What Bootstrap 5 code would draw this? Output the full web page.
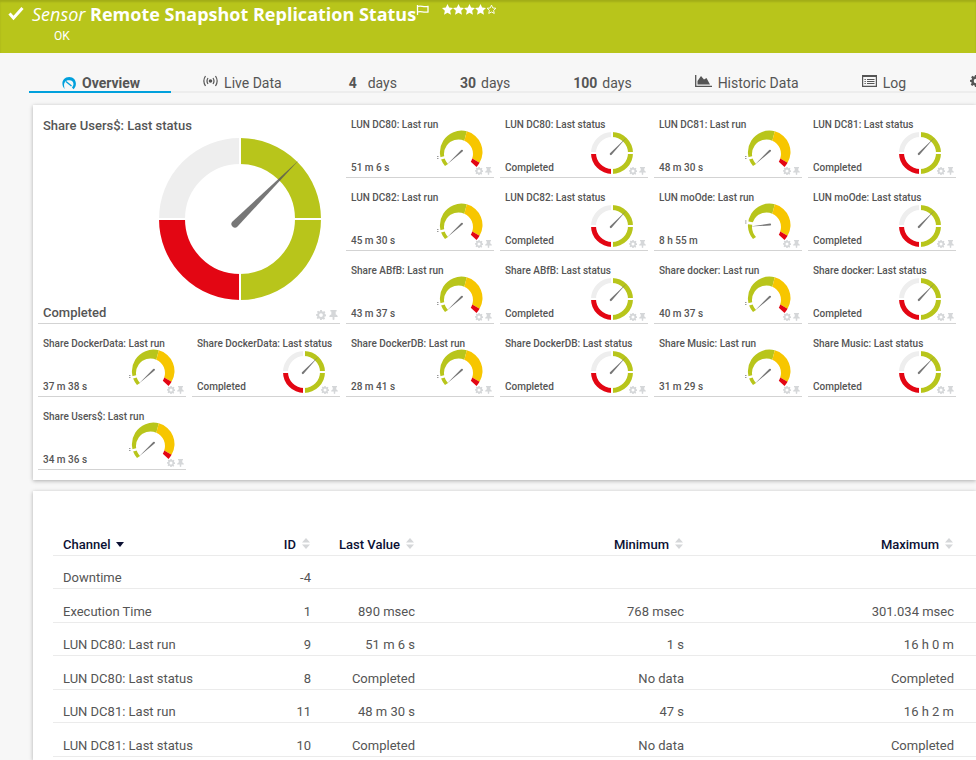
<!DOCTYPE html>
<html lang="en">
<head>
<meta charset="utf-8">
<meta name="viewport" content="width=device-width, initial-scale=1">
<title>Remote Snapshot Replication Status</title>
<link href="https://cdn.jsdelivr.net/npm/bootstrap@5.3.0/dist/css/bootstrap.min.css" rel="stylesheet">
<style>
  body { background: #f7f7f7; color: #555; font-family: Roboto, "Liberation Sans", sans-serif; font-size: 13px; line-height: 16px; overflow-x: hidden; }
  svg { display: block; flex: none; }
  .sensor-head { background: #b8c51b; color: #fff; min-height: 53px; padding: 2px 8px 8px; box-shadow: inset 0 2px 2px rgba(0,0,0,.12); }
  .sensor-head h1 { font-family: "Open Sans", "Noto Sans", sans-serif; font-size: 18px; line-height: 24px; }
  .sensor-state { font-size: 12px; line-height: 16px; padding: 2px 0 0 46px; }
  .head-btn { border: 0; background: none; padding: 3px 0 0; color: inherit; }
  .rating { padding: 2px 0 0 13px; }
  .tab-strip { margin-left: 29px; padding-top: 22px; box-shadow: inset 0 -2px #ededed; overflow: hidden; gap: 1px; }
  .tab-strip .nav-link { color: #555; font-size: 14px; line-height: 16px; padding: 0 31px; border-bottom: 2px solid transparent; display: flex; align-items: center; gap: 6px; white-space: nowrap; }
  .tab-strip .nav-link.active { color: #555; font-weight: 700; padding: 0 31px 0 33px; border-color: #00a0dc; }
  .tab-strip b { min-width: 14px; margin-right: -1px; }
  .tab-strip .nav-item { flex: none; }
  .panel { background: #fff; box-shadow: 0 1px 4px rgba(0,0,0,.3); margin-left: 33px; }
  .gauges { margin-top: 12px; padding: 6px 5px 10px; display: grid; grid-template-columns: repeat(auto-fill, 148px); grid-auto-rows: 67px; gap: 6px; }
  .tile { position: relative; border-bottom: 1px solid #d3d3d3; display: flex; flex-direction: column; }
  .tile h2 { font-size: 10px; line-height: 12px; font-weight: 500; margin: 0; padding: 8px 0 0 5px; white-space: nowrap; }
  .tile p { font-size: 10px; line-height: 12px; font-weight: 500; margin: 0; padding: 0 0 3px 5px; align-self: flex-end; }
  .tile .dial { margin: -1px 11px 0 auto; overflow: visible; }
  .tile .dial-ring { margin-right: 13px; }
  .tile-tools { position: absolute; right: 2px; bottom: 2px; display: flex; gap: 2px; }
  .tile-tools button { border: 0; background: none; padding: 0; color: #d5d7d9; }
  .tile-wide { grid-column: span 2; grid-row: span 3; }
  .tile-wide h2 { font-size: 13px; line-height: 15px; padding-top: 7px; }
  .tile-wide p { font-size: 13px; line-height: 14px; }
  .tile-wide .dial { margin: 5px 19px 0 auto; }
  .tile-wide .tile-tools { bottom: 3px; right: 2px; gap: 3px; }
  .channels { margin-top: 11px; padding: 42px 0 3px 20px; }
  .channels table { table-layout: fixed; font-size: 13px; line-height: 16px; margin: 0; color: #555; }
  .channels th, .channels td { padding: 0 10px 2px; height: 33px; vertical-align: bottom; text-align: right; border-bottom: 1px solid #ebebeb; color: #555; box-shadow: none; background: none; white-space: nowrap; }
  .channels tbody tr:nth-child(even) td { height: 34px; }
  .channels th { height: 22px; }
  .channels th:first-child, .channels td:first-child { text-align: left; }
  .channels th:last-child, .channels td:last-child { padding-right: 22px; }
  .sorter { border: 0; background: none; padding: 0; font-weight: 500; color: #0b1033; display: inline-flex; align-items: center; gap: 6px; }
  .sorter svg { color: #d5d7d9; margin: 0 1px 3px 0; }
  .sorter .sorted { color: #0b1033; margin-bottom: 0; }
  .c-name { width: 185px; } .c-id { width: 83px; } .c-last { width: 104px; } .c-min { width: 269px; }
</style>
</head>
<body class="d-flex flex-column min-vh-100">

<svg width="0" height="0" class="position-absolute" aria-hidden="true">
  <symbol id="gear" viewBox="0 0 16 16"><path fill="currentColor" fill-rule="evenodd" d="M6.600 0h2.800l.4 2.100 1.500.6L13.100 1.500l1.900 1.900-1.200 1.800.6 1.500 1.600.3v2.800l-2.100.4-.6 1.500 1.200 1.800-1.900 1.900-1.800-1.200-1.500.6L9.400 16H6.600l-.4-2.100-1.500-.6-1.800 1.200L1 12.600l1.200-1.800-.6-1.500L0 9V6.600l2.100-.4.6-1.500L1.500 2.900 3.400 1l1.800 1.200 1.100-.4zM8 5a3 3 0 1 0 0 6a3 3 0 0 0 0-6z"/></symbol>
  <symbol id="pin" viewBox="0 0 14 16"><path fill="currentColor" d="M2 0h10v2.500h-1.500V7c2 .5 3 1.600 3.300 4H8.500v4l-1.500 1l-1.500-1v-4H.2C.5 8.600 1.500 7.500 3.500 7V2.500H2z"/></symbol>
  <symbol id="star" viewBox="0 0 12 12"><path fill="currentColor" d="M6 0l1.800 3.900 4.200.5-3.100 2.900.9 4.300L6 9.500l-3.800 2.100.9-4.300L0 4.400l4.200-.5z"/></symbol>
  <symbol id="updown" viewBox="0 0 8 11"><path fill="currentColor" d="M4 0l4 4.500H0zM4 11L0 6.500h8z"/></symbol>
  <symbol id="ring" viewBox="-2 0 44 44">
    <g fill="none" stroke-width="5">
      <path stroke="#eee" d="M.5 23A18.500 18.500 0 0 1 19 4.500"/>
      <path stroke="#b8c51b" d="M19 4.500A18.500 18.500 0 0 1 19 41.500"/>
      <path stroke="#e30613" d="M19 41.500A18.500 18.500 0 0 1 .5 23"/>
      <path stroke="#fff" stroke-width="2" d="M19 0V44M-3 23H42"/>
    </g>
    <path fill="#777" d="M33.500 7.500L18.600 24.700a1 1 0 0 1-1.600-1.400z"/>
  </symbol>
  <symbol id="arc" viewBox="0 0 44 44">
    <path fill="#b8c51b" d="M6 36A21.500 21.500 0 0 1 27.800 1.300L25.300 10.700A14.500 14.500 0 0 0 9 34z"/>
    <path fill="#f7c600" d="M27.800 1.300A21.500 21.500 0 0 1 40.600 32.800L33.200 28.600A14.500 14.500 0 0 0 25.300 10.700z"/>
    <path fill="#e30613" d="M40.600 32.800A21.500 21.500 0 0 1 37.500 36.900L31.800 31.800A14.500 14.500 0 0 0 33.200 28.600z"/>
  </symbol>
</svg>

<header class="sensor-head">
  <div class="d-flex">
    <svg class="mt-1" width="16" height="15" viewBox="0 0 16 15"><path d="M1.500 7.500l4 4.500L14.500 2" fill="none" stroke="#fff" stroke-width="3"/></svg>
    <h1 class="m-0 ms-2 fw-bold text-nowrap"><em class="fw-normal">Sensor</em> Remote Snapshot Replication Status</h1>
    <button class="head-btn align-self-start" aria-label="Flag"><svg width="13" height="10" viewBox="0 0 13 10"><path d="M1.500 0v10M1.500 1.500c4-1.500 5 1 10.500 0v5.500c-5.500 1-6.500-1.500-10.500 0" fill="none" stroke="#fff" stroke-width="1.300"/></svg></button>
    <div class="d-flex align-self-start rating" role="img" aria-label="Priority 4 of 5">
      <svg width="11" height="11"><use href="#star"/></svg><svg width="11" height="11"><use href="#star"/></svg><svg width="11" height="11"><use href="#star"/></svg><svg width="11" height="11"><use href="#star"/></svg><svg width="11" height="11" viewBox="0 0 12 12"><path fill="none" stroke="#fff" d="M6 1.200l1.400 3.100 3.400.4-2.500 2.300.7 3.300L6 8.700l-3 1.600.7-3.300-2.500-2.300 3.400-.4z"/></svg>
    </div>
  </div>
  <div class="sensor-state">OK</div>
</header>

<ul class="nav flex-nowrap tab-strip">
  <li class="nav-item"><a class="nav-link active" href="#overview"><svg width="14" height="13" viewBox="0 0 14 13"><path fill="#00a0dc" d="M2.800 12C-1.500 8 0 0 7.200 0C14 0 16 8 11.500 12.300L10 10.500C13 7 11 3.300 7.500 3.300C3 2.600.8 7 2.800 12z"/><path d="M4 4.500L9.500 9" stroke="#00a0dc" stroke-width="1.300"/></svg>Overview</a></li>
  <li class="nav-item me-1"><a class="nav-link" href="#live"><svg class="mb-1" width="15" height="12" viewBox="0 0 15 12" fill="none" stroke="#555"><circle cx="7.500" cy="6" r="1.800" fill="#555" stroke="none"/><path stroke-width="1.200" d="M5 3Q3 6 5 9M10 3q2 3 0 6M2.500 1Q-.8 6 2.500 11M12.500 1q3.300 5 0 10"/></svg>Live Data</a></li>
  <li class="nav-item"><a class="nav-link" href="#d4"><b>4</b>days</a></li>
  <li class="nav-item"><a class="nav-link" href="#d30"><b>30</b>days</a></li>
  <li class="nav-item"><a class="nav-link" href="#d100"><b>100</b>days</a></li>
  <li class="nav-item"><a class="nav-link" href="#historic"><svg class="mb-1" width="17" height="12" viewBox="0 0 17 12"><path d="M.7 0v11.300H17" fill="none" stroke="#555" stroke-width="1.300"/><path fill="#555" d="M2.500 9.500V6L6 1l3 3.500L11.500 3 15 9.500z"/></svg>Historic Data</a></li>
  <li class="nav-item"><a class="nav-link" href="#log"><svg class="mb-1" width="15" height="12" viewBox="0 0 15 12"><path d="M.6 1h13.800v10.300H.6z" fill="none" stroke="#555" stroke-width="1.200"/><path d="M0 1h15" stroke="#555" stroke-width="2"/><path d="M2.500 4.500h1.300M5 4.500h7.500M2.500 6.500h1.300M5 6.500h7.500M2.500 8.500h1.300M5 8.500h7.500" stroke="#555"/></svg>Log</a></li>
  <li class="nav-item"><a class="nav-link" href="#settings" aria-label="Settings"><svg class="mb-1" width="14" height="12"><use href="#gear"/></svg></a></li>
</ul>

<main class="d-flex flex-column flex-grow-1">
  <section class="panel gauges" id="gauges" aria-label="Gauges"></section>

  <section class="panel channels flex-grow-1" aria-label="Channels">
    <table class="table">
      <colgroup><col class="c-name"><col class="c-id"><col class="c-last"><col class="c-min"><col></colgroup>
      <thead><tr>
        <th scope="col"><button class="sorter">Channel <svg class="sorted" width="8" height="5" viewBox="0 0 8 5"><path fill="currentColor" d="M0 0h8L4 5z"/></svg></button></th>
        <th scope="col"><button class="sorter">ID <svg width="8" height="11"><use href="#updown"/></svg></button></th>
        <th scope="col"><button class="sorter">Last Value <svg width="8" height="11"><use href="#updown"/></svg></button></th>
        <th scope="col"><button class="sorter">Minimum <svg width="8" height="11"><use href="#updown"/></svg></button></th>
        <th scope="col"><button class="sorter">Maximum <svg width="8" height="11"><use href="#updown"/></svg></button></th>
      </tr></thead>
      <tbody>
        <tr><td>Downtime</td><td>-4</td><td></td><td></td><td></td></tr>
        <tr><td>Execution Time</td><td>1</td><td>890 msec</td><td>768 msec</td><td>301.034 msec</td></tr>
        <tr><td>LUN DC80: Last run</td><td>9</td><td>51 m 6 s</td><td>1 s</td><td>16 h 0 m</td></tr>
        <tr><td>LUN DC80: Last status</td><td>8</td><td>Completed</td><td>No data</td><td>Completed</td></tr>
        <tr><td>LUN DC81: Last run</td><td>11</td><td>48 m 30 s</td><td>47 s</td><td>16 h 2 m</td></tr>
        <tr><td>LUN DC81: Last status</td><td>10</td><td>Completed</td><td>No data</td><td>Completed</td></tr>
      </tbody>
    </table>
  </section>
</main>

<script>
  const gauges = [
    ["LUN DC80: Last run", "51 m 6 s"], ["LUN DC80: Last status", "Completed"],
    ["LUN DC81: Last run", "48 m 30 s"], ["LUN DC81: Last status", "Completed"],
    ["LUN DC82: Last run", "45 m 30 s"], ["LUN DC82: Last status", "Completed"],
    ["LUN moOde: Last run", "8 h 55 m"], ["LUN moOde: Last status", "Completed"],
    ["Share ABfB: Last run", "43 m 37 s"], ["Share ABfB: Last status", "Completed"],
    ["Share docker: Last run", "40 m 37 s"], ["Share docker: Last status", "Completed"],
    ["Share DockerData: Last run", "37 m 38 s"], ["Share DockerData: Last status", "Completed"],
    ["Share DockerDB: Last run", "28 m 41 s"], ["Share DockerDB: Last status", "Completed"],
    ["Share Music: Last run", "31 m 29 s"], ["Share Music: Last status", "Completed"],
    ["Share Users$: Last run", "34 m 36 s"]
  ];
  const tools = (g, p) => `<div class="tile-tools">
    <button aria-label="Gauge settings"><svg width="${g}" height="${g}"><use href="#gear"/></svg></button>
    <button aria-label="Pin gauge"><svg width="${p}" height="${g}"><use href="#pin"/></svg></button></div>`;
  const needle = {
    low: `<path fill="#fff" d="M0 27.500L8 25.500V28L0 30z"/><path stroke="#999" d="M-2 26.500h1.500M-2 28.500h1.500"/><path fill="#777" d="M8 34.500L22.200 20a1 1 0 0 1 1.400 1.600z"/>`,
    mid: `<path fill="#fff" d="M-1 18L7 19.500V22L-1 21z"/><path stroke="#999" d="M-2 18h1.500M-2 20h1.500"/><path fill="#777" d="M3 23.500L23 20.500a1 1 0 0 1 .2 2z"/>`
  };
  const dial = (title, value) => title.endsWith("status")
    ? `<svg class="dial dial-ring" width="44" height="44"><use href="#ring"/></svg>`
    : `<svg class="dial" width="44" height="44" viewBox="0 0 44 44"><use href="#arc"/>${value.includes("h") ? needle.mid : needle.low}</svg>`;
  const main = `<article class="tile tile-wide"><h2>Share Users$: Last status</h2>
    <div class="d-flex flex-grow-1"><p>Completed</p>
    <svg class="dial" width="162" height="162" viewBox="-81 -81 162 162">
      <g fill="none" stroke-width="26">
        <path stroke="#eee" d="M-68 0A68 68 0 0 1 0-68"/>
        <path stroke="#b8c51b" d="M0-68A68 68 0 0 1 0 68"/>
        <path stroke="#e30613" d="M0 68A68 68 0 0 1-68 0"/>
        <path stroke="#fff" stroke-width="2" d="M0-81V81M-81 0H81"/>
      </g>
      <path fill="#555" fill-opacity=".8" d="M59-59L-2.500 7.500A3.500 3.500 0 0 1-7.500 2.500z"/>
    </svg></div>${tools(10, 9)}</article>`;
  document.getElementById("gauges").innerHTML = main + gauges.map(([t, v]) =>
    `<article class="tile"><h2>${t}</h2><div class="d-flex flex-grow-1"><p>${v}</p>${dial(t, v)}</div>${tools(8, 7)}</article>`).join("");
</script>
<script src="https://cdn.jsdelivr.net/npm/bootstrap@5.3.0/dist/js/bootstrap.bundle.min.js"></script>
</body>
</html>
